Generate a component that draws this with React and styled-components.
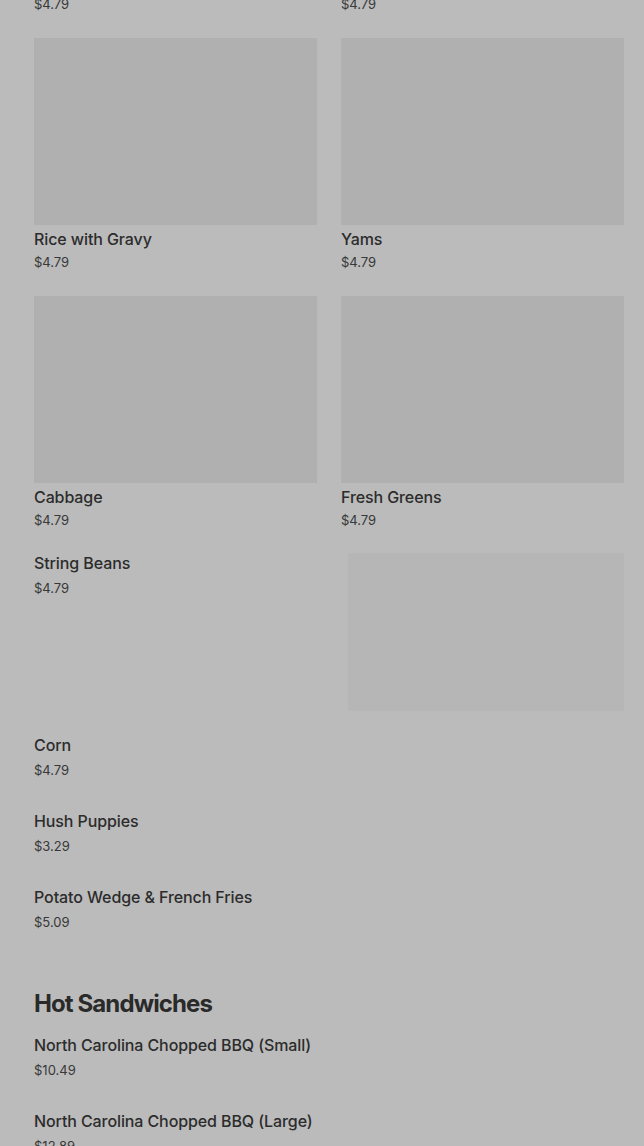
import styled, { createGlobalStyle } from "styled-components";

const GlobalStyle = createGlobalStyle`
  html, body {
    margin: 0;
    padding: 0;
    background: #bbbbbb;
    overflow: hidden;
  }
  body {
    font-family: Inter, "Noto Sans", "Liberation Sans", sans-serif;
    color: #2a2a2a;
  }
`;

/* page is scrolled: the row above "Rice with Gravy" is mostly off screen */
const Page = styled.main`
  margin-top: -220px;
  padding: 0 20px 0 34px;
`;

const Grid = styled.div`
  display: grid;
  grid-template-columns: 1fr 1fr;
  column-gap: 24px;
  row-gap: 26px;
`;

const Card = styled.div`
  display: flex;
  flex-direction: column;
`;

const Thumb = styled.div`
  height: ${(props) => props.$height || 187}px;
  width: ${(props) => (props.$width ? `${props.$width}px` : "100%")};
  background: ${(props) => props.$tone || "#b0b0b0"};
  flex-shrink: 0;
`;

const Name = styled.div`
  margin-top: ${(props) => (props.$flush ? 0 : 4)}px;
  font-size: 16px;
  line-height: 20px;
  font-weight: 500;
  color: #2c2c2c;
  letter-spacing: -0.1px;
`;

const Price = styled.div`
  margin-top: ${(props) => (props.$loose ? 7 : 5)}px;
  font-size: 13px;
  line-height: 16px;
  color: #383838;
`;

const WideItem = styled.div`
  grid-column: 1 / -1;
  display: flex;
  justify-content: space-between;
  align-items: flex-start;
  margin-top: -1px;
`;

const List = styled.div`
  margin-top: ${(props) => (props.$flush ? 0 : 24)}px;
  display: flex;
  flex-direction: column;
`;

const ListItem = styled.div`
  height: 76px;
`;

const SectionTitle = styled.h2`
  margin: 27px 0 17px;
  font-size: 24px;
  line-height: 28px;
  font-weight: 700;
  color: #2a2a2a;
  letter-spacing: -0.9px;
`;

const sides = [
  ["Macaroni & Cheese", "$4.79"],
  ["Potato Salad", "$4.79"],
  ["Rice with Gravy", "$4.79"],
  ["Yams", "$4.79"],
  ["Cabbage", "$4.79"],
  ["Fresh Greens", "$4.79"],
];

const plainSides = [
  ["Corn", "$4.79"],
  ["Hush Puppies", "$3.29"],
  ["Potato Wedge & French Fries", "$5.09"],
];

const sandwiches = [
  ["North Carolina Chopped BBQ (Small)", "$10.49"],
  ["North Carolina Chopped BBQ (Large)", "$12.89"],
];

export default function App() {
  return (
    <>
      <GlobalStyle />
      <Page>
        <Grid>
          {sides.map(([name, price]) => (
            <Card key={name}>
              <Thumb />
              <Name>{name}</Name>
              <Price>{price}</Price>
            </Card>
          ))}
          <WideItem>
            <div>
              <Name $flush>String Beans</Name>
              <Price $loose>$4.79</Price>
            </div>
            <Thumb $width={276} $height={158} $tone="#b6b6b6" />
          </WideItem>
        </Grid>

        <List>
          {plainSides.map(([name, price]) => (
            <ListItem key={name}>
              <Name $flush>{name}</Name>
              <Price $loose>{price}</Price>
            </ListItem>
          ))}
        </List>

        <SectionTitle>Hot Sandwiches</SectionTitle>
        <List $flush>
          {sandwiches.map(([name, price]) => (
            <ListItem key={name}>
              <Name $flush>{name}</Name>
              <Price $loose>{price}</Price>
            </ListItem>
          ))}
        </List>
      </Page>
    </>
  );
}
